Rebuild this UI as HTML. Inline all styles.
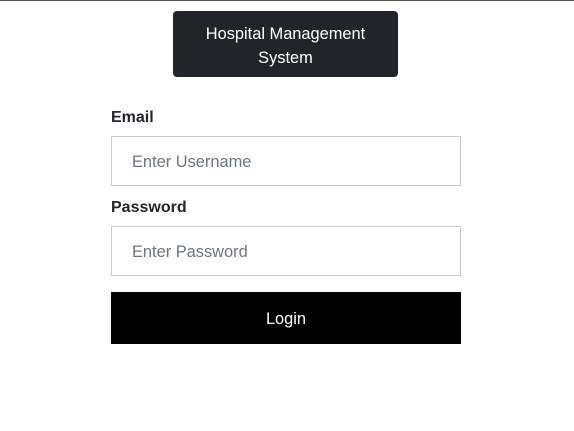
<!DOCTYPE html>
<html><head><style>
body{margin:0;width:574px;height:431px;background:#fff;font-family:"Liberation Sans",sans-serif;position:relative;overflow:hidden}
.top{position:absolute;left:0;top:0;width:574px;height:1px;background:#555}
.hdr{position:absolute;left:173px;top:11px;width:225px;height:66px;background:#212529;border-radius:4px;color:#fff;font-size:16.4px;line-height:24px;text-align:center;box-sizing:border-box;padding-top:11px}
.lbl{position:absolute;left:111px;font-weight:bold;font-size:16px;color:#212529}
.inp{position:absolute;left:111px;width:350px;height:50px;box-sizing:border-box;border:1px solid #ccc;color:#6c757d;font-size:16.4px;line-height:51px;padding-left:20px}
.btn{position:absolute;left:111px;top:292px;width:350px;height:52px;background:#000;color:#fff;font-size:16.4px;text-align:center;line-height:55px}
</style></head><body>
<div class="top"></div>
<div class="hdr">Hospital Management<br>System</div>
<div class="lbl" style="top:109px">Email</div>
<div class="inp" style="top:136px">Enter Username</div>
<div class="lbl" style="top:199px">Password</div>
<div class="inp" style="top:226px">Enter Password</div>
<div class="btn">Login</div>
</body></html>
